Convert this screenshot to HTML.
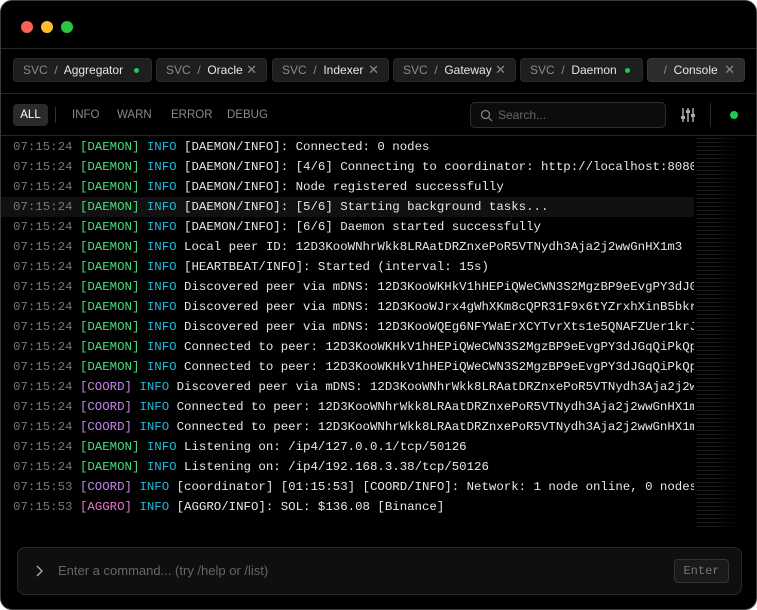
<!DOCTYPE html>
<html><head><meta charset="utf-8"><style>
*{box-sizing:border-box;margin:0;padding:0}
body{width:757px;height:610px;background:#fff;overflow:hidden;font-family:"Liberation Sans",sans-serif}
.win{position:absolute;left:0;top:0;width:757px;height:610px;background:#000;border:1px solid #3a3a3a;border-radius:12px;overflow:hidden}
.dot{position:absolute;top:20px;width:12px;height:12px;border-radius:50%}
.hr{position:absolute;left:0;right:0;height:1px;background:#262626}
.tab{position:absolute;top:57px;height:24px;background:#1e1e1e;border:1px solid #2a2a2a;border-radius:4px;font-size:12px;line-height:22px;color:#e6e6e6;padding-left:9px;white-space:nowrap}
.tab .s{color:#8a8a8a}
.tab .x{position:absolute;right:9px;top:0;color:#8a8a8a;font-size:13px}
.tab .g{position:absolute;right:12px;top:9px;width:5px;height:5px;border-radius:50%;background:#22c55e}
.flt{position:absolute;top:103px;height:22px;line-height:22px;font-size:11.5px;color:#8a8a8a}
.log{position:absolute;left:0;top:136px;width:693px;height:400px;overflow:hidden;font-family:"Liberation Mono",monospace;font-size:12.4px;color:#e8e8e8}
.log div{height:20px;line-height:20px;padding-left:12px;white-space:pre}
.t{color:#777}.d{color:#4ade80}.i{color:#22b8d8}.c{color:#c58ae8}.a{color:#e879c9}
.mini{position:absolute;left:696px;top:137px;width:48px;height:390px;background:repeating-linear-gradient(to bottom,rgba(120,120,120,.25) 0 1px,transparent 1px 4px);-webkit-mask:linear-gradient(to right,#000 0 35%,rgba(0,0,0,.4) 60%,transparent 100%)}
</style></head><body><div class="win">
<div class="dot" style="left:20px;background:#ff5f57"></div>
<div class="dot" style="left:40px;background:#febc2e"></div>
<div class="dot" style="left:60px;background:#28c840"></div>
<div class="hr" style="top:47px"></div>
<div class="tab" style="left:12px;width:139px"><span class="s">SVC&nbsp; /&nbsp; </span>Aggregator<span class="g"></span></div>
<div class="tab" style="left:155px;width:111px"><span class="s">SVC&nbsp; /&nbsp; </span>Oracle<span class="x">✕</span></div>
<div class="tab" style="left:271px;width:117px"><span class="s">SVC&nbsp; /&nbsp; </span>Indexer<span class="x">✕</span></div>
<div class="tab" style="left:392px;width:123px"><span class="s">SVC&nbsp; /&nbsp; </span>Gateway<span class="x">✕</span></div>
<div class="tab" style="left:519px;width:123px"><span class="s">SVC&nbsp; /&nbsp; </span>Daemon<span class="g"></span></div>
<div class="tab" style="left:646px;width:98px;background:#2c2c2c;border-color:#383838"><span class="s">&nbsp; /&nbsp; </span>Console<span class="x">✕</span></div>
<div class="hr" style="top:92px"></div>
<div class="flt" style="left:12px;width:35px;background:#2a2a2a;border-radius:4px;color:#fff;text-align:center">ALL</div>
<div style="position:absolute;left:54px;top:106px;width:1px;height:16px;background:#333"></div>
<div class="flt" style="left:71px">INFO</div>
<div class="flt" style="left:116px">WARN</div>
<div class="flt" style="left:170px">ERROR</div>
<div class="flt" style="left:226px">DEBUG</div>
<div style="position:absolute;left:469px;top:101px;width:196px;height:26px;border:1px solid #2e2e2e;border-radius:5px;background:#0c0c0c;font-size:12px;color:#666;line-height:24px;padding-left:27px">Search...
<svg style="position:absolute;left:9px;top:6px" width="13" height="13" viewBox="0 0 13 13"><circle cx="5.5" cy="5.5" r="4" fill="none" stroke="#888" stroke-width="1.2"/><path d="M8.5 8.5L12 12" stroke="#888" stroke-width="1.2"/></svg></div>
<svg style="position:absolute;left:680px;top:106px" width="14" height="16" viewBox="0 0 14 16"><g stroke="#aaa" stroke-width="1.5"><path d="M2 1v14M7 1v14M12 1v14"/></g><g fill="#aaa"><rect x="0" y="9" width="4" height="3"/><rect x="5" y="3" width="4" height="3"/><rect x="10" y="7" width="4" height="3"/></g></svg>
<div style="position:absolute;left:709px;top:102px;width:1px;height:24px;background:#2a2a2a"></div>
<div style="position:absolute;left:729px;top:110px;width:8px;height:8px;border-radius:50%;background:#22c55e"></div>
<div class="hr" style="top:134px"></div>
<div style="position:absolute;left:0;top:196px;width:693px;height:20px;background:#111"></div>
<div class="log"><div><span class="t">07:15:24</span> <span class="d">[DAEMON]</span> <span class="i">INFO</span> [DAEMON/INFO]: Connected: 0 nodes</div><div><span class="t">07:15:24</span> <span class="d">[DAEMON]</span> <span class="i">INFO</span> [DAEMON/INFO]: [4/6] Connecting to coordinator: http://localhost:8080</div><div><span class="t">07:15:24</span> <span class="d">[DAEMON]</span> <span class="i">INFO</span> [DAEMON/INFO]: Node registered successfully</div><div><span class="t">07:15:24</span> <span class="d">[DAEMON]</span> <span class="i">INFO</span> [DAEMON/INFO]: [5/6] Starting background tasks...</div><div><span class="t">07:15:24</span> <span class="d">[DAEMON]</span> <span class="i">INFO</span> [DAEMON/INFO]: [6/6] Daemon started successfully</div><div><span class="t">07:15:24</span> <span class="d">[DAEMON]</span> <span class="i">INFO</span> Local peer ID: 12D3KooWNhrWkk8LRAatDRZnxePoR5VTNydh3Aja2j2wwGnHX1m3</div><div><span class="t">07:15:24</span> <span class="d">[DAEMON]</span> <span class="i">INFO</span> [HEARTBEAT/INFO]: Started (interval: 15s)</div><div><span class="t">07:15:24</span> <span class="d">[DAEMON]</span> <span class="i">INFO</span> Discovered peer via mDNS: 12D3KooWKHkV1hHEPiQWeCWN3S2MgzBP9eEvgPY3dJGqQiPkQp</div><div><span class="t">07:15:24</span> <span class="d">[DAEMON]</span> <span class="i">INFO</span> Discovered peer via mDNS: 12D3KooWJrx4gWhXKm8cQPR31F9x6tYZrxhXinB5bkr</div><div><span class="t">07:15:24</span> <span class="d">[DAEMON]</span> <span class="i">INFO</span> Discovered peer via mDNS: 12D3KooWQEg6NFYWaErXCYTvrXts1e5QNAFZUer1krJ</div><div><span class="t">07:15:24</span> <span class="d">[DAEMON]</span> <span class="i">INFO</span> Connected to peer: 12D3KooWKHkV1hHEPiQWeCWN3S2MgzBP9eEvgPY3dJGqQiPkQp</div><div><span class="t">07:15:24</span> <span class="d">[DAEMON]</span> <span class="i">INFO</span> Connected to peer: 12D3KooWKHkV1hHEPiQWeCWN3S2MgzBP9eEvgPY3dJGqQiPkQp</div><div><span class="t">07:15:24</span> <span class="c">[COORD]</span> <span class="i">INFO</span> Discovered peer via mDNS: 12D3KooWNhrWkk8LRAatDRZnxePoR5VTNydh3Aja2j2wwGnHX1m3</div><div><span class="t">07:15:24</span> <span class="c">[COORD]</span> <span class="i">INFO</span> Connected to peer: 12D3KooWNhrWkk8LRAatDRZnxePoR5VTNydh3Aja2j2wwGnHX1m3</div><div><span class="t">07:15:24</span> <span class="c">[COORD]</span> <span class="i">INFO</span> Connected to peer: 12D3KooWNhrWkk8LRAatDRZnxePoR5VTNydh3Aja2j2wwGnHX1m3</div><div><span class="t">07:15:24</span> <span class="d">[DAEMON]</span> <span class="i">INFO</span> Listening on: /ip4/127.0.0.1/tcp/50126</div><div><span class="t">07:15:24</span> <span class="d">[DAEMON]</span> <span class="i">INFO</span> Listening on: /ip4/192.168.3.38/tcp/50126</div><div><span class="t">07:15:53</span> <span class="c">[COORD]</span> <span class="i">INFO</span> [coordinator] [01:15:53] [COORD/INFO]: Network: 1 node online, 0 nodes</div><div><span class="t">07:15:53</span> <span class="a">[AGGRO]</span> <span class="i">INFO</span> [AGGRO/INFO]: SOL: $136.08 [Binance]</div></div>
<div class="mini"></div>
<div style="position:absolute;left:16px;top:546px;width:725px;height:48px;border:1px solid #2a2a2a;border-radius:8px;background:#0f0f0f"></div>
<svg style="position:absolute;left:34px;top:563px" width="10" height="14" viewBox="0 0 10 14"><path d="M2 2l5 5-5 5" fill="none" stroke="#aaa" stroke-width="1.4"/></svg>
<div style="position:absolute;left:57px;top:561px;font-size:13px;line-height:18px;color:#666">Enter a command... (try /help or /list)</div>
<div style="position:absolute;left:673px;top:558px;width:55px;height:24px;border:1px solid #333;border-radius:4px;background:#1a1a1a;color:#777;font-family:'Liberation Mono',monospace;font-size:12px;line-height:22px;text-align:center">Enter</div>
</div></body></html>
